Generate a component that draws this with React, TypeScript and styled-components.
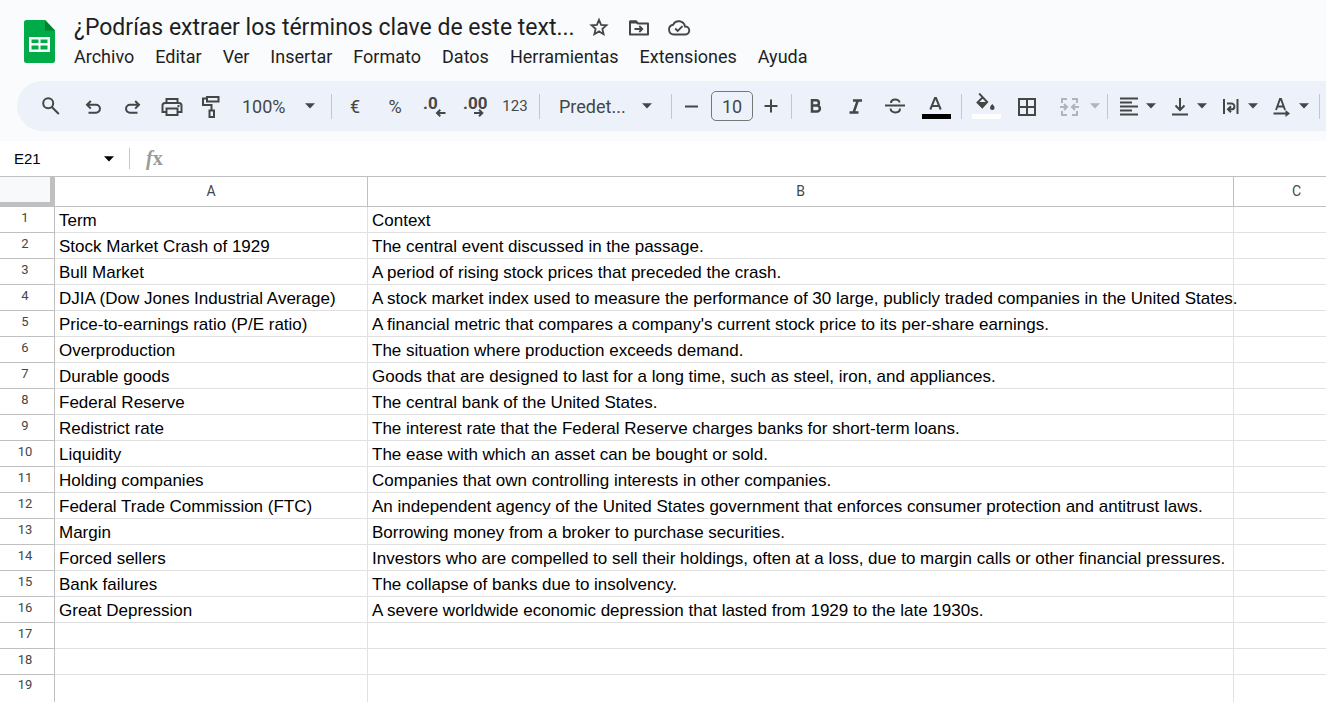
import React from "react";
import styled, { createGlobalStyle } from "styled-components";

const ink = "#444746";
const ui = `Roboto, "Liberation Sans", sans-serif`;

const GlobalStyle = createGlobalStyle`
  *, *::before, *::after { box-sizing: border-box; }
  html, body, #root { height: 100%; }
  body { margin: 0; background: #fff; overflow: hidden; font-family: ${ui}; }
  button, input, select { font: inherit; color: inherit; border: 0; padding: 0; margin: 0; background: none; }
  button { cursor: pointer; }
`;

const Page = styled.div`
  display: flex;
  flex-direction: column;
  height: 100%;
  overflow: hidden;
`;

const Chrome = styled.header`
  background: #f9fbfd;
  padding-bottom: 10px;
`;

const TopBar = styled.div`
  display: flex;
  height: 81px;
  padding: 12px 16px 0 24px;
  gap: 18px;
`;

const Logo = styled.svg`
  width: 31px;
  height: 43px;
  margin-top: 8px;
  flex: none;
`;

const TitleBlock = styled.div`
  display: flex;
  flex-direction: column;
  min-width: 0;
`;

const TitleRow = styled.div`
  display: flex;
  align-items: center;
  height: 30px;
`;

const TitleInput = styled.input`
  width: 502px;
  height: 30px;
  padding-left: 1px;
  font-size: 23px;
  color: #1f1f1f;
  outline: none;
`;

const TitleActions = styled.div`
  display: flex;
  gap: 16px;
  margin-left: 12px;
`;

const IconButton = styled.button`
  display: flex;
  align-items: center;
  justify-content: center;
  width: 24px;
  height: 24px;
  color: ${ink};
`;

const Menu = styled.nav`
  display: flex;
  gap: 21px;
  height: 30px;
  align-items: center;
  padding-left: 1px;
`;

const MenuItem = styled.button`
  font-size: 18px;
  line-height: 24px;
  color: #1f1f1f;
  white-space: nowrap;
`;

const Toolbar = styled.div`
  display: flex;
  align-items: center;
  height: 50px;
  margin-left: 17px;
  padding-left: 14px;
  border-radius: 25px 0 0 25px;
  background: #edf2fa;
  color: ${ink};
  overflow: hidden;
`;

const Tool = styled.button<{ $w?: number; $size?: number; $end?: number }>`
  display: flex;
  flex: none;
  align-items: center;
  justify-content: center;
  width: ${(p) => p.$w ?? 40}px;
  height: 36px;
  margin-right: ${(p) => p.$end ?? 0}px;
  font-size: ${(p) => p.$size ?? 16}px;
  font-weight: 400;
`;

const Divider = styled.span`
  flex: none;
  width: 1px;
  height: 25px;
  margin: 0 3px 0 4px;
  background: #c7c7c7;
`;

const SelectBox = styled.label<{ $w: number; $pad: number }>`
  display: flex;
  flex: none;
  align-items: center;
  width: ${(p) => p.$w}px;
  padding-left: ${(p) => p.$pad}px;
  select {
    appearance: none;
    flex: 1;
    min-width: 0;
    font-size: 18px;
    height: 32px;
    outline: none;
  }
`;

const CaretBox = styled.svg<{ $end?: number }>`
  flex: none;
  width: 10px;
  height: 6px;
  margin-right: ${(p) => p.$end ?? 0}px;
`;

const MenuTool = styled.button<{ $w?: number; $muted?: boolean }>`
  display: flex;
  flex: none;
  align-items: center;
  justify-content: space-between;
  width: ${(p) => p.$w ?? 51}px;
  height: 36px;
  padding: ${(p) => (p.$muted ? "0 3px 0 10px" : "0 6px")};
  color: ${(p) => (p.$muted ? "#b1b5ba" : ink)};
`;

const SizeInput = styled.input`
  flex: none;
  width: 42px;
  height: 30px;
  margin: 0 2px 0 4px;
  border: 1px solid #747775;
  border-radius: 5px;
  text-align: center;
  font-size: 18px;
`;

const ColorStack = styled.span`
  display: flex;
  flex-direction: column;
  align-items: center;
`;

const Swatch = styled.span<{ $c: string }>`
  width: 29px;
  height: 5px;
  background: ${(p) => p.$c};
`;

const FormulaBar = styled.div`
  display: flex;
  flex: none;
  align-items: center;
  height: 36px;
  padding-left: 14px;
  border-bottom: 1px solid #c0c0c0;
`;

const NameBox = styled.input`
  width: 90px;
  height: 26px;
  font-family: "Liberation Sans", Arial, sans-serif;
  font-size: 15px;
  color: #000;
  outline: none;
`;

const BarDivider = styled.span`
  width: 1px;
  height: 21px;
  margin: 0 13px 0 15px;
  background: #c7c7c7;
`;

const FormulaInput = styled.input`
  flex: 1;
  height: 26px;
  margin-left: 8px;
  font-size: 16px;
  outline: none;
`;

const SheetArea = styled.main`
  flex: 1;
  min-height: 0;
  overflow: hidden;
`;

const Grid = styled.table`
  table-layout: fixed;
  width: 1360px;
  border-collapse: separate;
  border-spacing: 0;
  font-family: "Liberation Sans", Arial, sans-serif;
`;

const HeaderCol = styled.col`
  width: 55px;
`;

const DataCol = styled.col<{ $w: number }>`
  width: ${(p) => p.$w}px;
`;

const Corner = styled.td`
  height: 30px;
  padding: 0;
  background: #f8f9fa;
  border-right: 5px solid #c0c0c0;
  border-bottom: 5px solid #c0c0c0;
`;

const ColHead = styled.th`
  height: 30px;
  padding: 0 0 2px;
  border-right: 1px solid #c0c0c0;
  border-bottom: 1px solid #c0c0c0;
  font-family: ${ui};
  font-size: 14px;
  line-height: 20px;
  font-weight: 400;
  color: ${ink};
`;

const RowHead = styled.th`
  height: 26px;
  padding: 0 4px 4px 0;
  border-right: 1px solid #c0c0c0;
  border-bottom: 1px solid #c0c0c0;
  font-family: ${ui};
  font-size: 13px;
  line-height: 20px;
  font-weight: 400;
  color: ${ink};
`;

const Cell = styled.td`
  height: 26px;
  padding: 2px 4px 0;
  border-right: 1px solid #e1e1e1;
  border-bottom: 1px solid #e1e1e1;
  font-size: 17px;
  line-height: 20px;
  color: #000;
  white-space: nowrap;
`;

const Row = styled.tr`
  &:last-child > * {
    height: 40px;
    vertical-align: top;
  }
`;

const Icon = ({ children, w = 24, h = 24 }: { children: React.ReactNode; w?: number; h?: number }) => (
  <svg width={w} height={h} viewBox={`0 0 ${w} ${h}`} fill="none" stroke="currentColor" strokeWidth="2" aria-hidden="true">
    {children}
  </svg>
);

const Caret = ({ end }: { end?: number }) => (
  <CaretBox $end={end} viewBox="0 0 10 6" aria-hidden="true">
    <path d="M0 .3h10L5 5.5z" fill="currentColor" />
  </CaretBox>
);

const menus = ["Archivo", "Editar", "Ver", "Insertar", "Formato", "Datos", "Herramientas", "Extensiones", "Ayuda"];

const rows: [string, string][] = [
  ["Term", "Context"],
  ["Stock Market Crash of 1929", "The central event discussed in the passage."],
  ["Bull Market", "A period of rising stock prices that preceded the crash."],
  ["DJIA (Dow Jones Industrial Average)", "A stock market index used to measure the performance of 30 large, publicly traded companies in the United States."],
  ["Price-to-earnings ratio (P/E ratio)", "A financial metric that compares a company's current stock price to its per-share earnings."],
  ["Overproduction", "The situation where production exceeds demand."],
  ["Durable goods", "Goods that are designed to last for a long time, such as steel, iron, and appliances."],
  ["Federal Reserve", "The central bank of the United States."],
  ["Redistrict rate", "The interest rate that the Federal Reserve charges banks for short-term loans."],
  ["Liquidity", "The ease with which an asset can be bought or sold."],
  ["Holding companies", "Companies that own controlling interests in other companies."],
  ["Federal Trade Commission (FTC)", "An independent agency of the United States government that enforces consumer protection and antitrust laws."],
  ["Margin", "Borrowing money from a broker to purchase securities."],
  ["Forced sellers", "Investors who are compelled to sell their holdings, often at a loss, due to margin calls or other financial pressures."],
  ["Bank failures", "The collapse of banks due to insolvency."],
  ["Great Depression", "A severe worldwide economic depression that lasted from 1929 to the late 1930s."],
  ["", ""],
  ["", ""],
  ["", ""],
];

export default function App() {
  return (
    <Page>
      <GlobalStyle />
      <Chrome>
        <TopBar>
          <Logo viewBox="0 0 31 43" aria-hidden="true">
            <path d="M2.5 0H21l10 10.500v30a2.500 2.500 0 0 1-2.500 2.500h-26A2.500 2.500 0 0 1 0 40.500v-38A2.500 2.500 0 0 1 2.500 0z" fill="#00ac47" />
            <path d="M21 0l10 10.500H21z" fill="#00832d" />
            <path d="M5 17h21v15H5zM7.500 19.500v3.500h7v-3.500zM16.500 19.500v3.500h7v-3.500zM7.500 25.500V29.500h7v-4zM16.500 25.500V29.500h7v-4z" fill="#fff" fillRule="evenodd" />
          </Logo>
          <TitleBlock>
            <TitleRow>
              <TitleInput aria-label="Cambiar nombre" defaultValue="¿Podrías extraer los términos clave de este text..." />
              <TitleActions>
                <IconButton aria-label="Destacar">
                  <Icon>
                    <path d="M12 4.800l2.100 5 5.400.500-4.100 3.600 1.200 5.300-4.600-2.800-4.600 2.800 1.200-5.300-4.100-3.600 5.400-.500z" strokeWidth="1.800" />
                  </Icon>
                </IconButton>
                <IconButton aria-label="Mover">
                  <Icon>
                    <path d="M3 6.500h6l2 2h10V19.500H3z" strokeLinejoin="round" />
                    <path d="M3 5.500h6.500l2 3H3z" fill="currentColor" stroke="none" />
                    <path d="M7.500 14h7.500M12.300 11l3 3-3 3" strokeWidth="1.800" />
                  </Icon>
                </IconButton>
                <IconButton aria-label="Estado del documento">
                  <Icon>
                    <path d="M6.500 19.500a4.900 4.900 0 0 1-.400-9.700A6.300 6.300 0 0 1 18 11.500 4 4 0 0 1 18.500 19.500z" strokeWidth="1.900" />
                    <path d="M8.200 13.500l2.500 2.500 4.800-4.800" strokeWidth="1.900" />
                  </Icon>
                </IconButton>
              </TitleActions>
            </TitleRow>
            <Menu>
              {menus.map((m) => (
                <MenuItem key={m}>{m}</MenuItem>
              ))}
            </Menu>
          </TitleBlock>
        </TopBar>

        <Toolbar role="toolbar" aria-label="Principal">
          <Tool $w={39} $end={3} aria-label="Buscar">
            <Icon>
              <circle cx="9.200" cy="9.300" r="5" />
              <path d="M12.800 13l7 7" />
            </Icon>
          </Tool>
          <Tool $w={39} aria-label="Deshacer">
            <Icon>
              <path d="M9.800 7L6 10.800l3.800 3.800M6.500 10.800H15a3.900 3.900 0 0 1 0 7.900H7.500" />
            </Icon>
          </Tool>
          <Tool $w={39} aria-label="Rehacer">
            <Icon>
              <path d="M15.200 7l3.800 3.800-3.800 3.800M18.500 10.800H10a3.900 3.900 0 0 0 0 7.900h7.500" />
            </Icon>
          </Tool>
          <Tool $w={39} aria-label="Imprimir">
            <Icon>
              <path d="M7.500 9V5h11v4M7.500 18H3.500v-6.500A2.500 2.500 0 0 1 6 9h14a2.500 2.500 0 0 1 2.500 2.500V18h-4" />
              <path d="M7.500 14.500h11V21h-11z" />
              <path d="M18.500 11h2v2h-2z" fill="currentColor" stroke="none" />
            </Icon>
          </Tool>
          <Tool $w={39} aria-label="Copiar formato">
            <Icon>
              <path d="M9 3h11.500v4.500H9zM9 4.500H5v6.500h8.500v5M11.500 16.500h4.500V23h-4.500z" />
            </Icon>
          </Tool>
          <SelectBox $w={98} $pad={13}>
            <select aria-label="Zoom" defaultValue="100">
              <option value="100">100%</option>
              <option value="125">125%</option>
            </select>
            <Caret end={12} />
          </SelectBox>
          <Divider />
          <Tool $size={18} aria-label="Formato de moneda">€</Tool>
          <Tool $size={18} aria-label="Formato de porcentaje">%</Tool>
          <Tool aria-label="Reducir decimales">
            <Icon>
              <text x="0" y="15" fontSize="17" fontWeight="700" fill="currentColor" stroke="none">.0</text>
              <path d="M22.500 19h-8M17.300 15.800L14 19l3.300 3.200" />
            </Icon>
          </Tool>
          <Tool aria-label="Aumentar decimales">
            <Icon>
              <text x="0" y="15" fontSize="17" fontWeight="700" fill="currentColor" stroke="none">.00</text>
              <path d="M11 19h8M16 15.800l3.300 3.200-3.300 3.200" />
            </Icon>
          </Tool>
          <Tool $size={15} aria-label="Más formatos">123</Tool>
          <Divider />
          <SelectBox $w={124} $pad={16}>
            <select aria-label="Fuente" defaultValue="d">
              <option value="d">Predet...</option>
              <option value="a">Arial</option>
            </select>
            <Caret end={15} />
          </SelectBox>
          <Divider />
          <Tool $w={32} aria-label="Reducir tamaño">
            <Icon><path d="M6 12.500h13" /></Icon>
          </Tool>
          <SizeInput aria-label="Tamaño de fuente" defaultValue="10" />
          <Tool $w={32} aria-label="Aumentar tamaño">
            <Icon><path d="M5.500 12h13M12 5.500v13" /></Icon>
          </Tool>
          <Divider />
          <Tool aria-label="Negrita">
            <Icon>
              <path d="M9 6.200h4.200a2.700 2.700 0 0 1 0 5.400H9zM9 11.600h4.900a3 3 0 0 1 0 6H9z" strokeWidth="2.500" />
            </Icon>
          </Tool>
          <Tool aria-label="Cursiva">
            <Icon>
              <path d="M10 6.500h9M6.500 18.500h9M14.800 6.500l-4.200 12" strokeWidth="2.500" />
            </Icon>
          </Tool>
          <Tool aria-label="Tachado">
            <Icon>
              <path d="M2 11.500h20M8 9c0-4.500 8.500-4.500 8.500-.500M7.500 14.500c.500 5.200 9.500 5.200 9.500 0" />
            </Icon>
          </Tool>
          <Tool $w={42} aria-label="Color del texto">
            <ColorStack>
              <Icon h={21}>
                <path d="M6.300 16.500L11 5h1L16.700 16.500M7.800 13h7.500" />
              </Icon>
              <Swatch $c="#000" />
            </ColorStack>
          </Tool>
          <Divider />
          <Tool $w={42} aria-label="Color de relleno">
            <ColorStack>
              <Icon h={21}>
                <path d="M5.200.500l8 8.600-4.900 5.200-4.800-4.800 5-5" strokeWidth="1.900" />
                <path d="M3.500 9.100h10l-5.200 5.600z" fill="currentColor" stroke="none" />
                <path d="M18.300 11s2.300 2.300 2.300 3.700a2.300 2.300 0 0 1-4.600 0c0-1.400 2.300-3.700 2.300-3.700z" fill="currentColor" stroke="none" />
              </Icon>
              <Swatch $c="#fff" />
            </ColorStack>
          </Tool>
          <Tool aria-label="Bordes">
            <Icon><path d="M4 5h16v16H4zM12 5v16M4 13h16" /></Icon>
          </Tool>
          <MenuTool $w={56} $muted aria-label="Combinar celdas">
            <Icon>
              <path d="M10 5H5v4M15 5h5v4M10 21H5v-4M15 21h5v-4M3 13h6.500M22 13h-6.500M7 10l3 3-3 3M18 10l-3 3 3 3" />
            </Icon>
            <Caret />
          </MenuTool>
          <Divider />
          <MenuTool aria-label="Alineación horizontal">
            <Icon><path d="M3 4.500h18M3 8.500h12M3 12.500h18M3 16.500h12M3 20.500h18" strokeWidth="1.800" /></Icon>
            <Caret />
          </MenuTool>
          <MenuTool aria-label="Alineación vertical">
            <Icon><path d="M4 20.500h16M12 4v12M7.500 11.500l4.500 4.500 4.500-4.500" /></Icon>
            <Caret />
          </MenuTool>
          <MenuTool aria-label="Ajuste de texto">
            <Icon>
              <path d="M5 5v15M18.500 5v15M8 9.500h4.500a2.900 2.900 0 0 1 0 5.800H9M12 12.300L9 15.300l3 3" />
            </Icon>
            <Caret />
          </MenuTool>
          <MenuTool aria-label="Rotación de texto">
            <Icon>
              <path d="M6 16L10 5h1l4 11M7.500 12.500h6" strokeWidth="1.900" />
              <path d="M3.500 19.500h13" />
              <path d="M15.500 16l4.500 3.500-4.500 3.500z" fill="currentColor" stroke="none" />
            </Icon>
            <Caret />
          </MenuTool>
          <Divider />
        </Toolbar>
      </Chrome>

      <FormulaBar>
        <NameBox aria-label="Cuadro de nombres" defaultValue="E21" />
        <Caret />
        <BarDivider />
        <svg width="24" height="24" viewBox="0 0 24 24" fill="#9a9c9b" aria-hidden="true">
          <text x="3" y="18" fontFamily="Liberation Serif, serif" fontStyle="italic" fontWeight="700" fontSize="20">
            f<tspan fontStyle="normal">x</tspan>
          </text>
        </svg>
        <FormulaInput aria-label="Barra de fórmulas" />
      </FormulaBar>

      <SheetArea>
        <Grid>
          <colgroup>
            <HeaderCol />
            <DataCol $w={313} />
            <DataCol $w={866} />
            <DataCol $w={126} />
          </colgroup>
          <thead>
            <tr>
              <Corner />
              <ColHead scope="col">A</ColHead>
              <ColHead scope="col">B</ColHead>
              <ColHead scope="col">C</ColHead>
            </tr>
          </thead>
          <tbody>
            {rows.map(([term, context], i) => (
              <Row key={i}>
                <RowHead scope="row">{i + 1}</RowHead>
                <Cell>{term}</Cell>
                <Cell>{context}</Cell>
                <Cell />
              </Row>
            ))}
          </tbody>
        </Grid>
      </SheetArea>
    </Page>
  );
}
